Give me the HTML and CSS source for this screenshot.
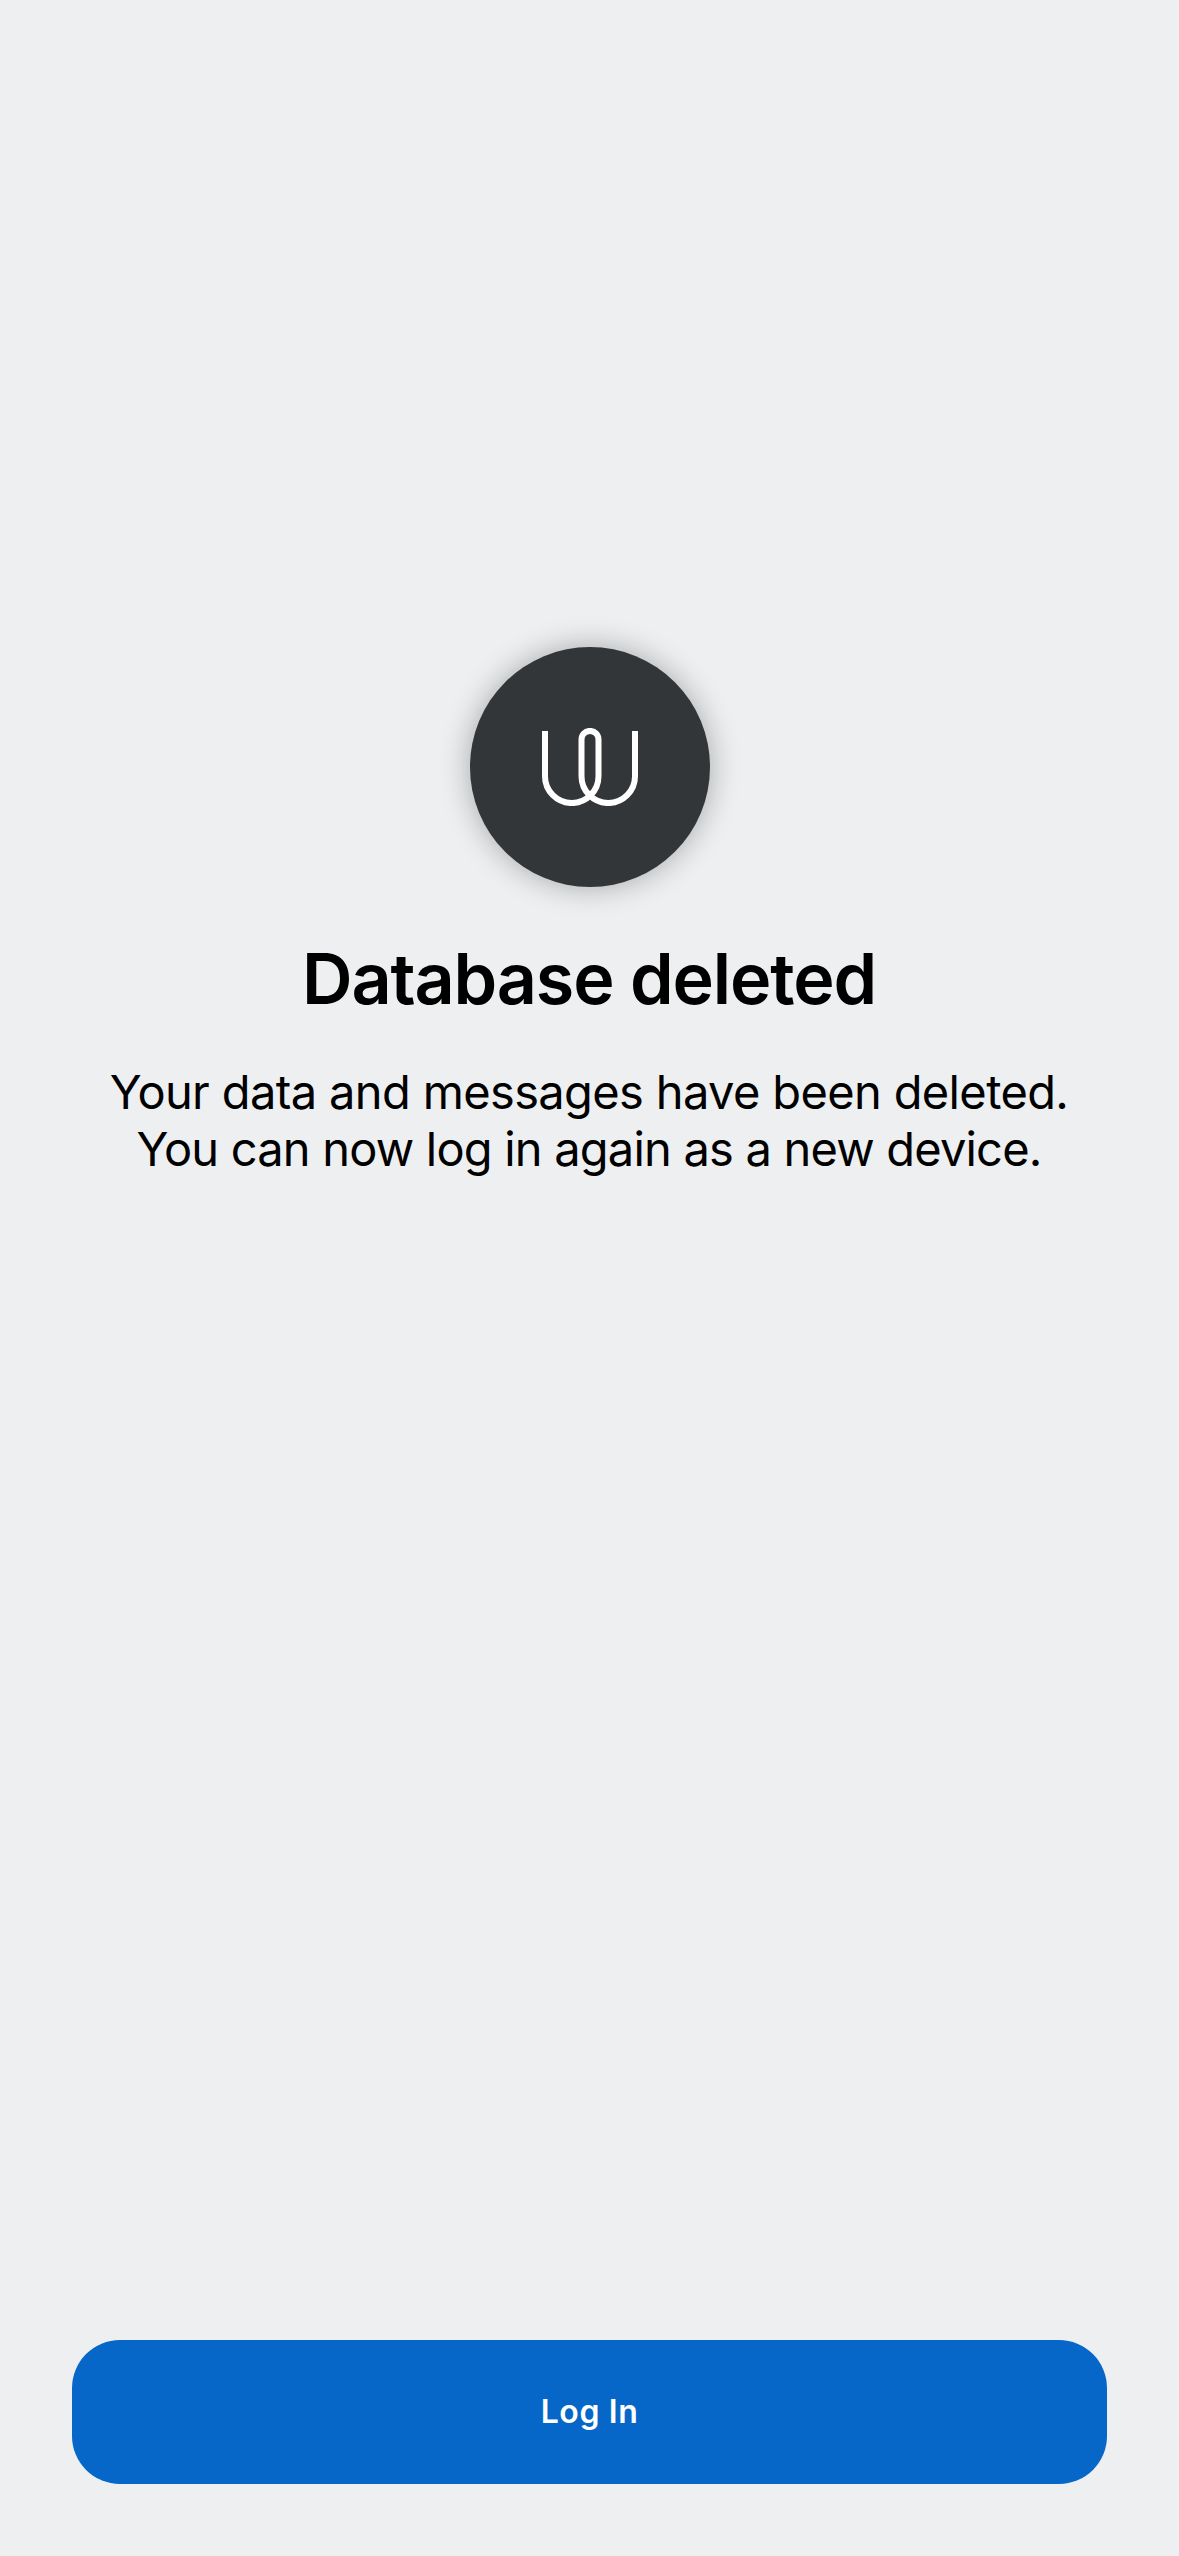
FILE: index.html
```html
<!DOCTYPE html>
<html lang="en">
<head>
  <meta charset="utf-8">
  <title>Database deleted</title>
  <link rel="stylesheet" href="styles.css">
</head>
<body>
  <main class="screen">
    <section class="message">
      <div class="logo">
        <svg class="logo-mark" viewBox="0 0 96 78" fill="none" stroke="#fff" stroke-width="6">
          <path d="M3 3v45.3a26.75 26.75 0 0 0 53.5 0V11.4a8.5 8.5 0 0 0-17 0v36.9a26.75 26.75 0 0 0 53.5 0V3"/>
        </svg>
      </div>
      <h1 class="title">Database deleted</h1>
      <p class="text"><span class="line line-first">Your data and messages have been deleted.</span> <span class="line line-second">You can now log in again as a new device.</span></p>
    </section>
    <button class="login" type="button">Log In</button>
  </main>
</body>
</html>
```

FILE: styles.css
```css
body {
  margin: 0;
  background: #edeff0;
  color: #000;
  font-family: Inter, "Liberation Sans", sans-serif;
}

.screen {
  box-sizing: border-box;
  height: 2556px;
  padding: 647px 72px 72px;
  display: flex;
  flex-direction: column;
  justify-content: space-between;
}

.message {
  display: flex;
  flex-direction: column;
  align-items: center;
}

.logo {
  box-sizing: border-box;
  width: 240px;
  height: 240px;
  padding: 81px 72px;
  border-radius: 50%;
  background: #323639;
  box-shadow: 0 0 30px rgba(0, 0, 0, 0.3);
}

.logo-mark {
  display: block;
  width: 96px;
  height: 78px;
}

.title {
  margin: 49px 0 0;
  padding-right: 1px;
  font-size: 70px;
  font-weight: 600;
  line-height: 86px;
  letter-spacing: -1.12px;
  white-space: nowrap;
}

.text {
  margin: 41px 0 0;
  padding-right: 1px;
  font-size: 47px;
  line-height: 57px;
  text-align: center;
}

.line {
  display: block;
  white-space: nowrap;
}

.line-first {
  letter-spacing: -0.63px;
}

.line-second {
  letter-spacing: -0.8px;
}

.login {
  height: 144px;
  padding: 0 0 1px;
  border: 0;
  border-radius: 48px;
  background: #0667c8;
  color: #fff;
  font: 600 32px/40px Inter, "Liberation Sans", sans-serif;
  letter-spacing: 0.6px;
}
```
